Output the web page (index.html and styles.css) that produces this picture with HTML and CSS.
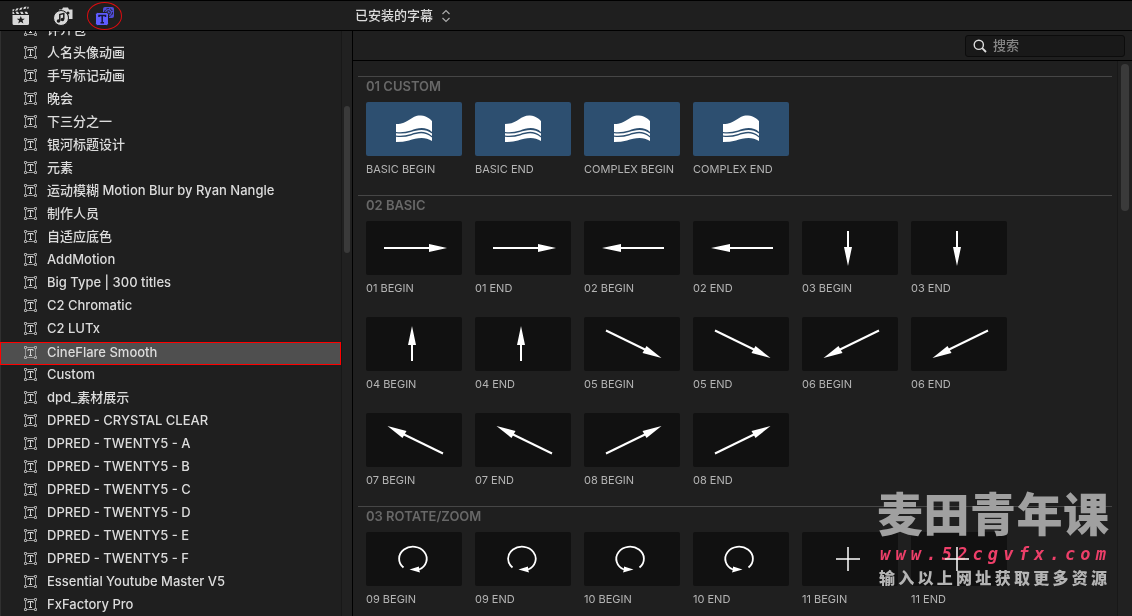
FILE: index.html
```html
<!DOCTYPE html>
<html lang="zh-CN">
<head>
<meta charset="utf-8">
<title>字幕浏览器</title>
<link rel="stylesheet" href="styles.css">
</head>
<body>
<svg class="sprite" aria-hidden="true">
  <symbol id="title" viewBox="0 0 14 13"><path d="M3 1.500h7M3 11.500h7M1.500 3v7M11.500 3v7" stroke="#999" fill="none"/><path d="M.5.5h2v2h-2zM10.500.5h2v2h-2zM.5 10.500h2v2h-2zM10.500 10.500h2v2h-2z" stroke="#aaa" fill="none"/><path d="M4 5V3.500h5V5M6.500 3.500v6M5 9.500h3" stroke="#d4d4d4" fill="none"/></symbol>
  <symbol id="flag" viewBox="0 0 96 54"><path d="M30 22C43 22 45 13 55 13.500C61 14 64 17 66 19V30C60 24 51 26 45 28.500Q37 31 30 30Z"/><path d="M30 31.300Q38 32.300 45 30C51 28 59 26 66 31.500V34C59 28 52 29.500 45 32Q37 34.500 30 33.500Z"/><path d="M30 34.800Q38 35.800 45 33.500C52 31 59 29.500 66 35.500V39C59 34 50 36 43 38.500Q37 40 30 40Z"/></symbol>
  <symbol id="right" viewBox="0 0 96 54"><path d="M18 26h45v-3l18 4-18 4v-3H18z"/></symbol>
  <symbol id="left" viewBox="0 0 96 54"><path d="M80 26H37v-3l-19 4 19 4v-3h43z"/></symbol>
  <symbol id="down" viewBox="0 0 96 54"><path d="M45 10h2v16h3l-4 19-4-19h3z"/></symbol>
  <symbol id="up" viewBox="0 0 96 54"><path d="M45 44h2V28h3L46 9l-4 19h3z"/></symbol>
  <symbol id="se" viewBox="0 0 96 54"><path d="M22 13.500 64 34" stroke="#fff" stroke-width="2"/><path d="M77.500 41 58.500 36l4-7z"/></symbol>
  <symbol id="sw" viewBox="0 0 96 54"><path d="M77 13.500 35 34" stroke="#fff" stroke-width="2"/><path d="M21.500 41 40.500 36l-4-7z"/></symbol>
  <symbol id="nw" viewBox="0 0 96 54"><path d="M77 40.500 35 20" stroke="#fff" stroke-width="2"/><path d="M21.500 13 40.500 18l-4 7z"/></symbol>
  <symbol id="ne" viewBox="0 0 96 54"><path d="M22 40.500 64 20" stroke="#fff" stroke-width="2"/><path d="M77.500 13 58.500 18l4 7z"/></symbol>
  <symbol id="cw" viewBox="0 0 96 54"><path d="M37.500 35.500A13.800 12 0 1 1 53 37.500" fill="none" stroke="#fff" stroke-width="1.800"/><path d="M43.500 37.500 53 34.500V37L54 40.500z"/></symbol>
  <symbol id="ccw" viewBox="0 0 96 54"><path d="M55.500 35.500A13.800 12 0 1 0 40 37.500" fill="none" stroke="#fff" stroke-width="1.800"/><path d="M49.500 37.500 40 34.500V37L39 40.500z"/></symbol>
  <symbol id="plus" viewBox="0 0 96 54"><path d="M34 27h24M46 15v24" stroke="#fff" stroke-width="1.500"/></symbol>
</svg>
<div class="app">
  <header class="topbar">
    <nav class="tabs">
      <button class="tab" aria-label="媒体"><svg width="20" height="20" viewBox="0 0 20 20"><path fill="#d8d8d8" fill-rule="evenodd" d="M1.500 9H18v8.500q0 1.500-1.500 1.500H3q-1.500 0-1.500-1.500zM9.800 10l-1.100 2.800H5.800l2.300 1.700-.9 2.900L9.800 15.700l2.600 1.700-.9-2.900 2.300-1.700h-2.900z"/><path fill="#d8d8d8" d="M1.500 5.800h1l1.200 2.200H1.500zM4.500 5.800H7L8.200 8H5.700zM9 5.800h2.500L12.700 8h-2.500zM13.500 5.800H16L17.200 8h-2.500zM1.500 3.500 3.500 3l-.5 1.800-1.500.4zM5 2.700 7.500 2 6.700 4.300l-2.500.6zM9 1.900l2.500-.6-.8 2.300-2.500.6zM13 1.100l2.500-.6-.8 2.200-2.500.6zM17 .2l1 2-2.300.5z"/></svg></button>
      <button class="tab" aria-label="照片和音频"><svg width="20" height="20" viewBox="0 0 20 20"><path fill="#d8d8d8" d="M6 3.500h3l1-2h5l1 2h3.500V13H16q0-8-10-8z"/><circle cx="15" cy="7" r="1.500" fill="#1f1f1f"/><circle cx="8" cy="12" r="7.500" fill="#d8d8d8" stroke="#1f1f1f"/><path d="M6.800 15V8.500l4-1V13" fill="none" stroke="#1f1f1f" stroke-width="1.500"/><circle cx="5.500" cy="15" r="1.800" fill="#1f1f1f"/><circle cx="9.500" cy="13.500" r="1.800" fill="#1f1f1f"/></svg></button>
      <button class="tab tab-active" aria-label="字幕和发生器"><svg width="20" height="20" viewBox="0 0 20 20"><rect x="8" y="1" width="11" height="11" rx="2" fill="#4f4dd8"/><circle cx="13.500" cy="6.500" r="4" fill="none" stroke="#1f1f1f" stroke-dasharray="3 1"/><circle cx="13.500" cy="6.500" r="1.800" fill="none" stroke="#1f1f1f"/><rect x=".5" y="6.500" width="13" height="13" rx="2" fill="#5f5cff" stroke="#1f1f1f"/><path d="M4 11V9.500h6.500V11M7.200 9.500v7M5.500 16.700H9" fill="none" stroke="#15153c" stroke-width="1.500"/></svg></button>
    </nav>
    <button class="picker">已安装的字幕 <svg width="10" height="14" viewBox="0 0 10 14"><path d="M1.500 5 5 1.500 8.500 5M1.500 9 5 12.500 8.500 9" fill="none" stroke="#aaa" stroke-width="1.200"/></svg></button>
  </header>
  <aside class="sidebar">
    <ul class="list">
      <li class="row"><svg class="ico"><use href="#title"/></svg>评介包</li>
      <li class="row"><svg class="ico"><use href="#title"/></svg>人名头像动画</li>
      <li class="row"><svg class="ico"><use href="#title"/></svg>手写标记动画</li>
      <li class="row"><svg class="ico"><use href="#title"/></svg>晚会</li>
      <li class="row"><svg class="ico"><use href="#title"/></svg>下三分之一</li>
      <li class="row"><svg class="ico"><use href="#title"/></svg>银河标题设计</li>
      <li class="row"><svg class="ico"><use href="#title"/></svg>元素</li>
      <li class="row"><svg class="ico"><use href="#title"/></svg>运动模糊 Motion Blur by Ryan Nangle</li>
      <li class="row"><svg class="ico"><use href="#title"/></svg>制作人员</li>
      <li class="row"><svg class="ico"><use href="#title"/></svg>自适应底色</li>
      <li class="row"><svg class="ico"><use href="#title"/></svg>AddMotion</li>
      <li class="row"><svg class="ico"><use href="#title"/></svg>Big Type | 300 titles</li>
      <li class="row"><svg class="ico"><use href="#title"/></svg>C2 Chromatic</li>
      <li class="row"><svg class="ico"><use href="#title"/></svg>C2 LUTx</li>
      <li class="row row-selected"><svg class="ico"><use href="#title"/></svg>CineFlare Smooth</li>
      <li class="row"><svg class="ico"><use href="#title"/></svg>Custom</li>
      <li class="row"><svg class="ico"><use href="#title"/></svg>dpd_素材展示</li>
      <li class="row"><svg class="ico"><use href="#title"/></svg>DPRED - CRYSTAL CLEAR</li>
      <li class="row"><svg class="ico"><use href="#title"/></svg>DPRED - TWENTY5 - A</li>
      <li class="row"><svg class="ico"><use href="#title"/></svg>DPRED - TWENTY5 - B</li>
      <li class="row"><svg class="ico"><use href="#title"/></svg>DPRED - TWENTY5 - C</li>
      <li class="row"><svg class="ico"><use href="#title"/></svg>DPRED - TWENTY5 - D</li>
      <li class="row"><svg class="ico"><use href="#title"/></svg>DPRED - TWENTY5 - E</li>
      <li class="row"><svg class="ico"><use href="#title"/></svg>DPRED - TWENTY5 - F</li>
      <li class="row"><svg class="ico"><use href="#title"/></svg>Essential Youtube Master V5</li>
      <li class="row"><svg class="ico"><use href="#title"/></svg>FxFactory Pro</li>
    </ul>
    <div class="lane lane-side"><div class="thumb"></div></div>
  </aside>
  <main class="browser">
    <div class="toolbar">
      <label class="search"><svg width="14" height="14" viewBox="0 0 14 14"><circle cx="5.800" cy="5.800" r="4.600" fill="none" stroke="#ddd" stroke-width="1.400"/><path d="M9.200 9.200 13 13" stroke="#ddd" stroke-width="1.800"/></svg><input type="search" placeholder="搜索" aria-label="搜索"></label>
    </div>
    <div class="content">
      <div class="sections">
        <section class="section">
          <h2>01 CUSTOM</h2>
          <div class="grid">
            <figure><svg class="pic pic-blue"><use href="#flag"/></svg><figcaption>BASIC BEGIN</figcaption></figure>
            <figure><svg class="pic pic-blue"><use href="#flag"/></svg><figcaption>BASIC END</figcaption></figure>
            <figure><svg class="pic pic-blue"><use href="#flag"/></svg><figcaption>COMPLEX BEGIN</figcaption></figure>
            <figure><svg class="pic pic-blue"><use href="#flag"/></svg><figcaption>COMPLEX END</figcaption></figure>
          </div>
        </section>
        <section class="section">
          <h2>02 BASIC</h2>
          <div class="grid">
            <figure><svg class="pic"><use href="#right"/></svg><figcaption>01 BEGIN</figcaption></figure>
            <figure><svg class="pic"><use href="#right"/></svg><figcaption>01 END</figcaption></figure>
            <figure><svg class="pic"><use href="#left"/></svg><figcaption>02 BEGIN</figcaption></figure>
            <figure><svg class="pic"><use href="#left"/></svg><figcaption>02 END</figcaption></figure>
            <figure><svg class="pic"><use href="#down"/></svg><figcaption>03 BEGIN</figcaption></figure>
            <figure><svg class="pic"><use href="#down"/></svg><figcaption>03 END</figcaption></figure>
            <figure><svg class="pic"><use href="#up"/></svg><figcaption>04 BEGIN</figcaption></figure>
            <figure><svg class="pic"><use href="#up"/></svg><figcaption>04 END</figcaption></figure>
            <figure><svg class="pic"><use href="#se"/></svg><figcaption>05 BEGIN</figcaption></figure>
            <figure><svg class="pic"><use href="#se"/></svg><figcaption>05 END</figcaption></figure>
            <figure><svg class="pic"><use href="#sw"/></svg><figcaption>06 BEGIN</figcaption></figure>
            <figure><svg class="pic"><use href="#sw"/></svg><figcaption>06 END</figcaption></figure>
            <figure><svg class="pic"><use href="#nw"/></svg><figcaption>07 BEGIN</figcaption></figure>
            <figure><svg class="pic"><use href="#nw"/></svg><figcaption>07 END</figcaption></figure>
            <figure><svg class="pic"><use href="#ne"/></svg><figcaption>08 BEGIN</figcaption></figure>
            <figure><svg class="pic"><use href="#ne"/></svg><figcaption>08 END</figcaption></figure>
          </div>
        </section>
        <section class="section">
          <h2>03 ROTATE/ZOOM</h2>
          <div class="grid">
            <figure><svg class="pic"><use href="#cw"/></svg><figcaption>09 BEGIN</figcaption></figure>
            <figure><svg class="pic"><use href="#cw"/></svg><figcaption>09 END</figcaption></figure>
            <figure><svg class="pic"><use href="#ccw"/></svg><figcaption>10 BEGIN</figcaption></figure>
            <figure><svg class="pic"><use href="#ccw"/></svg><figcaption>10 END</figcaption></figure>
            <figure><svg class="pic"><use href="#plus"/></svg><figcaption>11 BEGIN</figcaption></figure>
            <figure><svg class="pic"><use href="#plus"/></svg><figcaption>11 END</figcaption></figure>
          </div>
        </section>
      </div>
      <div class="lane lane-main"><div class="thumb"></div></div>
    </div>
  </main>
  <div class="watermark">
    <p class="wm-name">麦田青年课</p>
    <p class="wm-url"><span>w</span><span>w</span><span>w</span><span>.</span><span>5</span><span>2</span><span>c</span><span>g</span><span>v</span><span>f</span><span>x</span><span>.</span><span>c</span><span>o</span><span>m</span></p>
    <p class="wm-note">输入以上网址获取更多资源</p>
  </div>
</div>
</body>
</html>
```
FILE: styles.css
```css
* { box-sizing: border-box; }
body {
  margin: 0;
  background: #1f1f1f;
  color: #dcdcdc;
  font: 500 13px/23px Inter, "Noto Sans CJK SC", sans-serif;
}
button { padding: 0; border: 0; background: none; color: inherit; font: inherit; }
ul, p, h2, figure { margin: 0; padding: 0; }
.sprite { position: absolute; width: 0; height: 0; }
.app {
  position: relative;
  display: grid;
  grid-template: 31px minmax(0, 1fr) / 352px minmax(0, 1fr);
  height: 100vh;
  overflow: hidden;
}
.topbar {
  grid-column: 1 / -1;
  display: grid;
  grid-template-columns: 355px 1fr;
  align-items: center;
  border-top: 1px solid #000;
  border-bottom: 1px solid #000;
}
.tabs { display: flex; align-items: center; gap: 7px; padding-left: 3px; }
.tab { display: grid; place-items: center; width: 35px; height: 28px; border: 1px solid transparent; border-radius: 50%; }
.tab-active { border-color: #d90d10; }
.picker { display: flex; align-items: center; gap: 8px; justify-self: start; }

.sidebar { display: flex; min-height: 0; background: linear-gradient(90deg, #303030 1px, transparent 1px); }
.list { flex: 1; margin-top: -11px; list-style: none; clip-path: inset(11px 0 0); }
.row { display: flex; align-items: center; gap: 9px; height: 23px; padding: 0 0 4px 24px; white-space: nowrap; }
.ico { width: 14px; height: 13px; flex: none; }
.row-selected { padding: 0 0 2px 23px; border: 1px solid #f00; background: #4f4f4f; }
.lane { flex: none; border-left: 1px solid #181818; background: #212121; }
.lane-side { width: 11px; padding: 75px 2px 0; }
.thumb { height: 147px; border-radius: 4px; background: #3a3a3a; }

.browser { display: flex; flex-direction: column; min-width: 0; min-height: 0; border-left: 1px solid #000; }
.toolbar { display: flex; flex: none; align-items: center; justify-content: flex-end; height: 30px; padding-right: 7px; border-bottom: 1px solid #000; }
.search { display: flex; align-items: center; gap: 6px; width: 160px; height: 22px; padding: 0 7px; border: 1px solid #0c0c0c; border-radius: 3px; background: #191919; }
.search input { flex: 1; min-width: 0; padding: 0; border: 0; outline: 0; background: none; color: #ddd; font: inherit; }
.search input::placeholder { color: #858585; }
.content { display: flex; flex: 1; min-height: 0; }
.sections { flex: 1; min-width: 0; padding: 15px 5px 0; }
.section { margin-bottom: 13px; padding: 0 8px; border-top: 1px solid #464646; }
.section h2 { height: 25px; color: #686868; font-size: 13px; font-weight: 600; line-height: 19px; }
.grid { display: grid; grid-template-columns: repeat(auto-fill, 96px); gap: 16px 13px; }
.grid figure { height: 80px; }
.pic { display: block; width: 96px; height: 54px; border-radius: 2px; background: #111; fill: #fff; }
.pic-blue { background: #2d4f70; }
figcaption { color: #b4b4b4; font-size: 11px; font-weight: 400; line-height: 26px; white-space: nowrap; }
.lane-main { width: 15px; padding: 3px 3px 0; }

.watermark { position: absolute; right: 23px; bottom: 25px; width: 232px; mix-blend-mode: lighten; font-family: "Noto Sans CJK SC", sans-serif; font-weight: 900; }
.wm-name { margin-bottom: 7px; color: #a0a0a0; font-size: 46px; line-height: 54px; text-align-last: justify; }
.wm-url { display: flex; justify-content: space-between; padding: 0 3px; color: #ed3f69; font: italic 700 17px/18px "DejaVu Sans Mono", monospace; }
.wm-note { padding: 0 2px; color: #b4b4b4; font-size: 16px; line-height: 28px; text-align-last: justify; }
```
